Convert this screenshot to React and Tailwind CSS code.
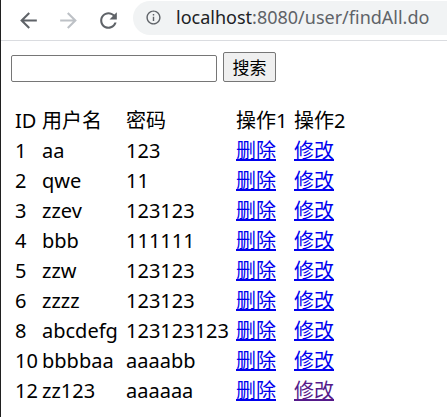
const rows = [
  ["1", "aa", "123"],
  ["2", "qwe", "11"],
  ["3", "zzev", "123123"],
  ["4", "bbb", "111111"],
  ["5", "zzw", "123123"],
  ["6", "zzzz", "123123"],
  ["8", "abcdefg", "123123123"],
  ["10", "bbbbaa", "aaaabb"],
  ["12", "zz123", "aaaaaa"],
];

const BackIcon = ({ color }) => (
  <svg width="25" height="25" viewBox="0 0 24 24" fill={color}>
    <path d="M20 11H7.83l5.59-5.59L12 4l-8 8 8 8 1.41-1.41L7.83 13H20v-2z" />
  </svg>
);

const ForwardIcon = ({ color }) => (
  <svg width="25" height="25" viewBox="0 0 24 24" fill={color}>
    <path d="M4 11h12.17l-5.59-5.59L12 4l8 8-8 8-1.41-1.41L16.17 13H4v-2z" />
  </svg>
);

const ReloadIcon = () => (
  <svg width="25" height="25" viewBox="0 0 24 24" fill="#5f6368">
    <path d="M17.65 6.35C16.2 4.9 14.21 4 12 4c-4.42 0-7.99 3.58-7.99 8s3.57 8 7.99 8c3.73 0 6.84-2.55 7.73-6h-2.08c-.82 2.33-3.04 4-5.65 4-3.31 0-6-2.69-6-6s2.69-6 6-6c1.66 0 3.14.69 4.22 1.78L13 11h7V4l-2.35 2.35z" />
  </svg>
);

const InfoIcon = () => (
  <svg width="17" height="17" viewBox="0 0 24 24" fill="#5f6368">
    <path d="M11 7h2v2h-2zm0 4h2v6h-2zm1-9C6.48 2 2 6.48 2 12s4.48 10 10 10 10-4.48 10-10S17.52 2 12 2zm0 18c-4.41 0-8-3.59-8-8s3.59-8 8-8 8 3.59 8 8-3.59 8-8 8z" />
  </svg>
);

export default function App() {
  return (
    <div
      className="h-[417px] w-full overflow-hidden border-l border-[#202020] bg-white text-black"
      style={{ fontFamily: '"Noto Sans", "Noto Sans CJK SC", sans-serif' }}
    >
      {/* browser toolbar */}
      <div className="flex h-[41px] items-center border-b border-[#dadce0]">
        <div className="ml-[15px] flex w-[25px] justify-center">
          <BackIcon color="#5f6368" />
        </div>
        <div className="ml-[15px] flex w-[25px] justify-center">
          <ForwardIcon color="#bdc1c6" />
        </div>
        <div className="ml-[15px] flex w-[25px] justify-center">
          <ReloadIcon />
        </div>
        <div className="ml-[12px] mb-[5px] flex h-[34px] flex-1 items-center rounded-l-full bg-[#f1f3f4] pl-[12px]">
          <InfoIcon />
          <span className="ml-[14px] whitespace-nowrap text-[18px] text-[#5f6368]">
            <span className="text-[#202124]">localhost</span>:8080/user/findAll.do
          </span>
        </div>
      </div>

      {/* search form */}
      <div className="flex items-end pl-[10px] pt-[11px]">
        <input
          type="text"
          className="h-[27px] w-[206px] rounded-[2px] border border-[#767676] bg-white outline-none"
        />
        <button className="ml-[6px] h-[30px] w-[53px] rounded-[2px] border border-[#767676] bg-[#efefef] text-[17px] leading-none">
          搜索
        </button>
      </div>

      {/* user table */}
      <div className="mt-[24px] grid grid-cols-[27px_84px_110px_58px_auto] pl-[14px] text-[20px] leading-[30px]">
        <div>ID</div>
        <div>用户名</div>
        <div>密码</div>
        <div>操作1</div>
        <div>操作2</div>
        {rows.map((r, i) => (
          <div key={r[0]} className="contents">
            <div>{r[0]}</div>
            <div>{r[1]}</div>
            <div>{r[2]}</div>
            <div>
              <a href="#" className="text-[#0000ee] underline">
                删除
              </a>
            </div>
            <div>
              <a
                href="#"
                className={
                  i === rows.length - 1
                    ? "text-[#551a8b] underline"
                    : "text-[#0000ee] underline"
                }
              >
                修改
              </a>
            </div>
          </div>
        ))}
      </div>
    </div>
  );
}
